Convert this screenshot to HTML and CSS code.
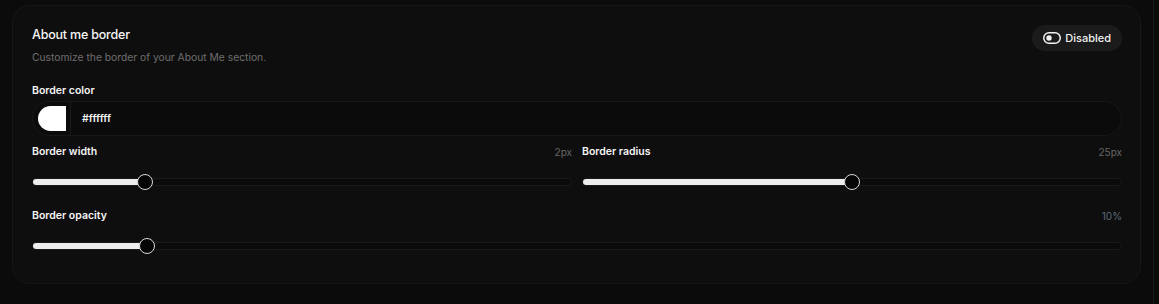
FILE: index.html
```html
<!DOCTYPE html>
<html lang="en">
<head>
<meta charset="utf-8">
<title>About me border</title>
<link rel="stylesheet" href="styles.css">
</head>
<body>
<div class="page">
  <section class="card">
    <header class="card-head">
      <div class="head-text">
        <h2 class="title">About me border</h2>
        <p class="subtitle">Customize the border of your About Me section.</p>
      </div>
      <button class="toggle-btn" type="button">
        <svg class="toggle-icon" viewBox="0 0 24 24" width="18" height="18" fill="none" stroke="currentColor" stroke-width="2" stroke-linecap="round" stroke-linejoin="round">
          <rect x="1" y="5" width="22" height="14" rx="7"/>
          <circle cx="8" cy="12" r="2.6" fill="currentColor"/>
        </svg>
        <span>Disabled</span>
      </button>
    </header>

    <div class="field">
      <div class="label">Border color</div>
      <div class="color-input">
        <span class="swatch"></span>
        <span class="divider"></span>
        <span class="hex">#ffffff</span>
      </div>
    </div>

    <div class="grid">
      <div class="field slider-field">
        <div class="label-row"><span class="label">Border width</span><span class="value">2px</span></div>
        <div class="slider" style="--p:0.2">
          <div class="track"><div class="fill"></div></div>
          <div class="thumb"></div>
        </div>
      </div>
      <div class="field slider-field">
        <div class="label-row"><span class="label">Border radius</span><span class="value">25px</span></div>
        <div class="slider" style="--p:0.5">
          <div class="track"><div class="fill"></div></div>
          <div class="thumb"></div>
        </div>
      </div>
      <div class="field slider-field wide">
        <div class="label-row"><span class="label">Border opacity</span><span class="value blue">10%</span></div>
        <div class="slider" style="--p:0.1">
          <div class="track"><div class="fill"></div></div>
          <div class="thumb"></div>
        </div>
      </div>
    </div>
  </section>
</div>
</body>
</html>
```
FILE: styles.css
```css
* { box-sizing: border-box; }
html, body { margin: 0; padding: 0; }
body {
  background: #0b0b0b;
  font-family: Inter, "Liberation Sans", sans-serif;
  color: #f2f2f2;
  width: 1159px;
  height: 304px;
  overflow: hidden;
}
.page {
  width: 1154px;
  height: 304px;
  border-right: 1px solid #181818;
  padding: 5px 0 0 12px;
}
.card {
  width: 1129px;
  height: 279px;
  background: #0e0e0e;
  border: 1px solid #171717;
  border-radius: 18px;
  padding: 21px 18px 0 19px;
}
.card-head {
  display: flex;
  justify-content: space-between;
  align-items: flex-start;
}
.title {
  margin: 0;
  font-size: 12.5px;
  line-height: 16px;
  font-weight: 500;
  color: #f5f5f5;
  letter-spacing: -0.2px;
}
.subtitle {
  margin: 7px 0 0;
  font-size: 10.3px;
  line-height: 14px;
  color: #6e6e6e;
}
.toggle-btn {
  margin-top: -2px;
  height: 26px;
  display: flex;
  align-items: center;
  gap: 4px;
  padding: 0 11px 0 11px;
  border: none;
  border-radius: 999px;
  background: #1b1b1b;
  color: #f2f2f2;
  font-family: inherit;
  font-size: 11px;
  font-weight: 500;
}
.toggle-icon { display: block; }

.field { margin-top: 20px; }
.label {
  font-size: 10.5px;
  line-height: 14px;
  font-weight: 600;
  color: #f5f5f5;
}
.color-input {
  margin-top: 3px;
  height: 35px;
  display: flex;
  align-items: center;
  border: 1px solid #181818;
  border-radius: 999px;
  background: #0b0b0b;
  padding-left: 5px;
}
.swatch {
  width: 28px;
  height: 25px;
  background: #fff;
  border-radius: 13px 0 0 13px;
}
.divider {
  align-self: stretch;
  width: 1px;
  background: #1a1a1a;
  margin-left: 4px;
}
.hex {
  margin-left: 11px;
  font-size: 10.5px;
  font-weight: 600;
  color: #f5f5f5;
}

.grid {
  margin-top: 9px;
  display: grid;
  grid-template-columns: 1fr 1fr;
  column-gap: 10px;
}
.grid .field { margin-top: 0; }
.grid .wide { grid-column: 1 / 3; margin-top: 19px; }
.label-row {
  display: flex;
  justify-content: space-between;
  align-items: center;
  height: 14px;
}
.value {
  font-size: 10px;
  color: #666;
}
.value.blue { color: #5b6a78; }

.slider {
  position: relative;
  margin-top: 15px;
  height: 16px;
  display: flex;
  align-items: center;
}
.track {
  position: relative;
  flex: 1;
  height: 8px;
  border: 1px solid #1a1a1a;
  border-radius: 999px;
  background: #0b0b0b;
}
.fill {
  position: absolute;
  left: 0;
  top: 0;
  bottom: 0;
  width: calc(8px + (100% - 16px) * var(--p));
  background: #eeeeee;
  border-radius: 999px 0 0 999px;
}
.thumb {
  position: absolute;
  top: 0;
  left: calc((100% - 16px) * var(--p));
  width: 16px;
  height: 16px;
  border-radius: 50%;
  background: #050505;
  border: 1.5px solid #d8d8d8;
}
```
